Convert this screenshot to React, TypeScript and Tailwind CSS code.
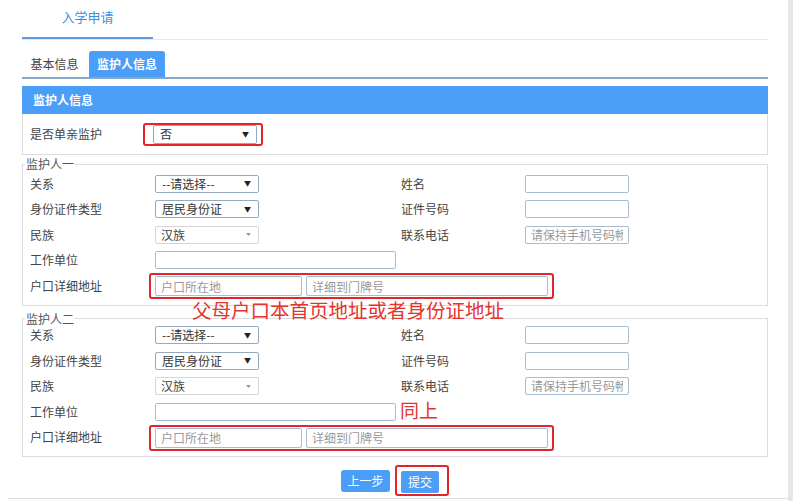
import React from 'react'

const FONT = '"Microsoft YaHei", "Noto Sans CJK SC", "Noto Sans", sans-serif'

function FakeSelect({ value, className = '' }: { value: string; className?: string }) {
  return (
    <div
      className={`flex items-center justify-between w-[104px] h-[18px] border border-[#93aac1] rounded-[2px] bg-white pl-[6px] pr-[7px] text-[12px] text-[#333] ${className}`}
    >
      <span className="leading-none">{value}</span>
      <span className="text-[7px] leading-none text-[#222]">▼</span>
    </div>
  )
}

function EthnicSelect() {
  return (
    <div className="flex items-center justify-between w-[104px] h-[18px] border border-[#d6d6d6] rounded-[2px] bg-white pl-[5px] pr-[7px] text-[12px] text-[#444]">
      <span className="leading-none">汉族</span>
      <svg width="5" height="3" viewBox="0 0 5 3">
        <path d="M0 0 L5 0 L2.5 3 Z" fill="#999" />
      </svg>
    </div>
  )
}

function TextInput({ width, placeholder, className = '' }: { width: number; placeholder?: string; className?: string }) {
  return (
    <input
      placeholder={placeholder}
      style={{ width }}
      className={`h-[18px] border border-[#a9bdd1] rounded-[2px] bg-white px-[5px] text-[12px] text-[#333] placeholder:text-[#999] outline-none ${className}`}
    />
  )
}

function Label({ children }: { children: React.ReactNode }) {
  return <span className="text-[12px] text-[#444] leading-none">{children}</span>
}

function Guardian({ title, second }: { title: string; second?: boolean }) {
  return (
    <fieldset className={`border border-[#dcdcdc] pb-[6px] ${second ? 'mt-[6px]' : 'mt-[2px]'}`}>
      <legend className="ml-[2px] px-px text-[12px] leading-[14px] text-[#555]">{title}</legend>
      <div
        className={`grid grid-cols-[125px_246px_124px_1fr] auto-rows-[25.5px] items-center pl-[7px] ${second ? '-mt-[3px]' : ''}`}
      >
        <Label>关系</Label>
        <FakeSelect value="--请选择--" />
        <Label>姓名</Label>
        <TextInput width={104} />

        <Label>身份证件类型</Label>
        <FakeSelect value="居民身份证" />
        <Label>证件号码</Label>
        <TextInput width={104} />

        <Label>民族</Label>
        <EthnicSelect />
        <Label>联系电话</Label>
        <TextInput
          width={104}
          placeholder="请保持手机号码畅通"
          className="border-[#a0a0a0] placeholder:text-[#777]"
        />

        <Label>工作单位</Label>
        <div className="col-span-3 flex items-center">
          <TextInput width={241} />
          {second && (
            <span className="ml-[4px] text-[19px] leading-none text-[#e5332e] -mt-[4px]">同上</span>
          )}
        </div>

        <Label>户口详细地址</Label>
        <div className="col-span-3">
          <div className="-ml-[6px] inline-flex gap-[4px] border-2 border-[#e0262b] rounded-[3px] pl-[4px] pr-[4px] py-px">
            <TextInput width={147} placeholder="户口所在地" className="h-[20px]" />
            <TextInput width={242} placeholder="详细到门牌号" className="h-[20px]" />
          </div>
        </div>
      </div>
    </fieldset>
  )
}

export default function App() {
  return (
    <div className="flex w-[793px] h-[501px] overflow-hidden bg-white" style={{ fontFamily: FONT }}>
      <div className="relative w-[788px] pl-[22px] pr-[20px]">
        {/* page title */}
        <div className="h-[40px] border-b border-[#e8e8e8]">
          <div className="w-[131px] h-full -mb-px border-b-2 border-[#5d9cda] flex items-center justify-center pb-[4px]">
            <span className="text-[13px] text-[#3d8fe3]">入学申请</span>
          </div>
        </div>

        {/* tabs */}
        <div className="mt-[11px] flex items-end border-b-2 border-[#86a9c8]">
          <div className="w-[65px] h-[26px] flex items-center justify-center text-[12px] text-[#444]">基本信息</div>
          <div className="ml-[2px] w-[76px] h-[26px] rounded-t-[3px] bg-[#4b9ef7] flex items-center justify-center text-[12px] font-bold text-white">
            监护人信息
          </div>
        </div>

        {/* panel */}
        <div className="mt-[7px] h-[28px] bg-[#4b9ef7] px-[11px] flex items-center text-[12px] font-bold text-white">
          监护人信息
        </div>
        <div className="h-[41px] border-x border-b border-[#dcdcdc] flex items-center pl-[7px]">
          <span className="w-[113px] text-[12px] text-[#444]">是否单亲监护</span>
          <div className="border-2 border-[#e0262b] rounded-[3px] pl-[8px] pr-[4px]">
            <FakeSelect value="否" className="h-[19px]" />
          </div>
        </div>

        <Guardian title="监护人一" />
        <Guardian title="监护人二" second />

        {/* annotation */}
        <div className="absolute left-[192px] top-[300px] text-[19.5px] leading-none text-[#e5332e] whitespace-nowrap">
          父母户口本首页地址或者身份证地址
        </div>

        {/* buttons */}
        <div className="mt-[8px] flex justify-center items-center gap-[5px]">
          <button className="w-[49px] h-[22px] rounded-[3px] bg-[#4b9ef7] text-[12px] text-white">上一步</button>
          <div className="border-2 border-[#e0262b] rounded-[3px] pl-[4px] pr-[8px] py-[1px]">
            <button className="w-[38px] h-[22px] rounded-[2px] bg-[#4b9ef7] text-[12px] text-white">提交</button>
          </div>
        </div>

        <div className="mt-[2px] -ml-[14px] -mr-[20px] h-px bg-[#dcdcdc]" />
      </div>
      <div className="w-[5px] h-full bg-[#e6e6e6]" />
    </div>
  )
}
